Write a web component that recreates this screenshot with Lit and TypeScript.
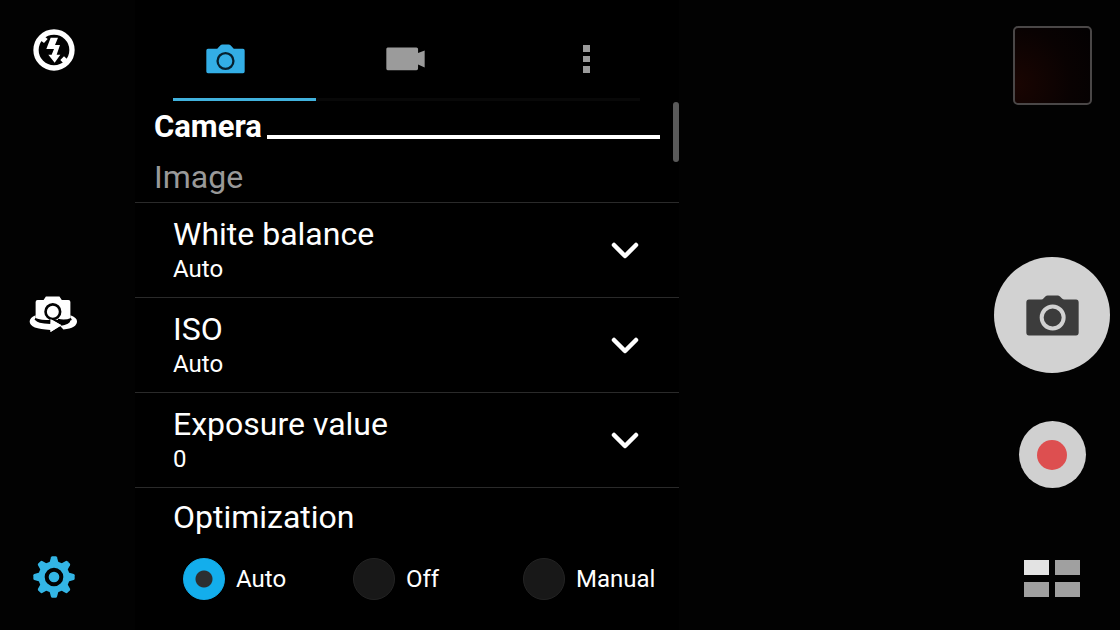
import { LitElement, html, css, svg } from 'lit';
import { customElement, property, state } from 'lit/decorators.js';
import { classMap } from 'lit/directives/class-map.js';

interface Setting {
  id: string;
  label: string;
  value: string;
  options: string[];
}

const flashOffIcon = svg`
  <svg viewBox="0 0 126 126" width="42" height="42" aria-hidden="true">
    <circle cx="63" cy="63" r="54" fill="none" stroke="currentColor" stroke-width="16" />
    <path d="M20 32 32 20 44 30 33 42Z M82 93 93 82 106 94 94 106Z" fill="currentColor" />
    <path d="M53 26H75L66 48H81L71 77H82L65 101 46 77H56L63 60H40Z" fill="currentColor" />
  </svg>`;

const switchIcon = svg`
  <svg viewBox="0 0 148 108" width="49" height="36" aria-hidden="true">
    <path d="M20 72V18Q20 12 26 12H44L51 1H92L99 12H119Q125 12 125 18V72Z" fill="currentColor" />
    <path d="M20 58Q2 65 2 77Q2 100 65 102V108L98 88 65 69V84Q22 82 20 72Z" fill="currentColor" />
    <path d="M125 58Q145 65 145 76Q145 97 104 101L94 90Q125 86 125 74Z" fill="currentColor" />
    <path d="M18 69Q36 76 65 76M87 72Q110 77 128 69" fill="none" stroke="#020202" stroke-width="7" />
    <circle cx="72" cy="47" r="22" fill="currentColor" stroke="#020202" stroke-width="8" />
    <path d="M65 69 98 88 65 108Z" fill="currentColor" />
  </svg>`;

const gearTeeth = [0, 45, 90, 135, 180, 225, 270, 315];

const gearIcon = svg`
  <svg viewBox="0 0 126 126" width="42" height="42" aria-hidden="true">
    <circle cx="63" cy="63" r="47" fill="currentColor" />
    ${gearTeeth.map(angle => svg`
      <path d="M49 22 54 4Q55 1 58 1H68Q71 1 72 4L77 22Z" fill="currentColor" transform="rotate(${angle} 63 63)" />
    `)}
    <circle cx="63" cy="63" r="22" fill="none" stroke="#020202" stroke-width="12" />
  </svg>`;

const cameraTabIcon = svg`
  <svg viewBox="0 0 118 90" width="39" height="30" aria-hidden="true">
    <path d="M6 14H34L43 4Q46 1 50 1H68Q72 1 75 4L84 14H112Q117 14 117 19V83Q117 88 112 88H6Q1 88 1 83V19Q1 14 6 14Z" fill="currentColor" />
    <circle cx="59" cy="51" r="24" fill="none" stroke="#06202f" stroke-width="7" />
  </svg>`;

const videoTabIcon = svg`
  <svg viewBox="0 0 118 72" width="39" height="24" aria-hidden="true">
    <path d="M5 1H92Q97 1 97 6V18L117 10V62L97 53V65Q97 70 92 70H5Q1 70 1 65V6Q1 1 5 1Z" fill="currentColor" />
  </svg>`;

const moreTabIcon = svg`
  <svg viewBox="0 0 7 28" width="7" height="28" aria-hidden="true">
    <path d="M0 0H7V7H0ZM0 11H7V17H0ZM0 21H7V28H0Z" fill="currentColor" />
  </svg>`;

const shutterIcon = svg`
  <svg viewBox="0 0 159 122" width="53" height="41" aria-hidden="true">
    <path d="M9 13H46Q50 13 53 9L58 4Q61 1 65 1H95Q99 1 102 4L108 10Q111 13 115 13H150Q158 13 158 22V112Q158 121 150 121H9Q1 121 1 112V22Q1 13 9 13Z" fill="#3c3c3c" />
    <circle cx="80" cy="67" r="33" fill="none" stroke="#d2d2d2" stroke-width="12" />
  </svg>`;

const chevronIcon = svg`
  <svg viewBox="0 0 28 18" width="28" height="18" aria-hidden="true">
    <path d="M3 4 14 15 25 4" fill="none" stroke="#fff" stroke-width="4.5" stroke-linecap="round" stroke-linejoin="round" />
  </svg>`;

@customElement('setting-row')
export class SettingRow extends LitElement {

  static styles = css`
    :host {
      display: block;
    }

    .row {
      display: grid;
      grid-template-columns: 1fr 28px;
      align-content: center;
      align-items: center;
      box-sizing: border-box;
      min-height: 95px;
      padding: 0 40px 0 38px;
      border-top: 1px solid #2a2a2a;
    }

    label {
      grid-area: 1 / 1;
      font-size: 32px;
      line-height: 38px;
    }

    select {
      grid-area: 2 / 1;
      appearance: none;
      margin: 0;
      padding: 0;
      border: none;
      background: none;
      color: inherit;
      font: inherit;
      font-size: 24px;
      line-height: 32px;
      cursor: pointer;
    }

    option {
      background: #111;
    }

    .chevron {
      grid-area: 1 / 2 / 3 / 3;
      display: flex;
      pointer-events: none;
    }
  `;

  @property({ attribute: false })
  setting!: Setting;

  render() {
    const { id, label, value, options } = this.setting;
    return html`
      <div class="row">
        <label for=${id}>${label}</label>
        <select id=${id}>
          ${options.map(option => html`<option ?selected=${option === value}>${option}</option>`)}
        </select>
        <span class="chevron">${chevronIcon}</span>
      </div>
    `;
  }
}

@customElement('app-root')
export class AppRoot extends LitElement {

  static styles = css`
    :host {
      display: flex;
      min-height: 100vh;
      background: #020202;
      color: #fff;
      font-family: Roboto, "Noto Sans", sans-serif;
    }

    button {
      display: flex;
      align-items: center;
      justify-content: center;
      margin: 0;
      padding: 0;
      border: none;
      background: none;
      color: inherit;
      cursor: pointer;
    }

    .tools {
      display: flex;
      flex: 0 0 107px;
      flex-direction: column;
      align-items: center;
      justify-content: space-between;
      box-sizing: border-box;
      margin-right: 28px;
      padding: 29px 0 32px;
    }

    .active {
      color: #33b5e5;
    }

    .panel {
      flex: 0 1 544px;
      min-width: 0;
      background: #000;
    }

    .tabs {
      display: grid;
      grid-template-columns: repeat(3, 1fr);
      padding: 20px 2px 0 0;
      color: #9b9b9b;
    }

    .tabs button {
      height: 78px;
    }

    .tabs .active {
      color: #33aee6;
    }

    .track {
      height: 3px;
      margin: 0 39px 0 38px;
      background: #080808;
    }

    .indicator {
      width: 143px;
      height: 3px;
      background: #41b2dd;
    }

    .settings {
      position: relative;
    }

    .scrollbar {
      position: absolute;
      top: 1px;
      right: 0;
      width: 6px;
      height: 60px;
      border-radius: 3px;
      background: #5a5a5a;
    }

    .section {
      display: flex;
      align-items: flex-end;
      gap: 5px;
      padding: 7px 19px 0;
    }

    h1, h2, legend {
      margin: 0;
      font-size: 32px;
      line-height: 38px;
    }

    h1 {
      font-size: 31px;
      font-weight: 700;
    }

    .rule {
      flex: 1;
      height: 4px;
      margin-bottom: 7px;
      background: #fff;
    }

    h2 {
      padding: 12px 19px 6px;
      font-weight: 400;
      color: #999;
    }

    fieldset {
      min-width: 0;
      margin: 0;
      padding: 0 0 0 38px;
      border: none;
      border-top: 1px solid #2a2a2a;
    }

    legend {
      float: left;
      width: 100%;
      padding: 10px 0 0;
    }

    .choices {
      display: grid;
      clear: both;
      grid-template-columns: 170px 170px 1fr;
      padding: 22px 0 0 10px;
    }

    .choice {
      display: flex;
      align-items: center;
      gap: 11px;
      font-size: 24px;
      line-height: 32px;
      cursor: pointer;
    }

    .choice input {
      appearance: none;
      flex: none;
      width: 42px;
      height: 42px;
      margin: 0;
      border: 1px solid #242424;
      border-radius: 50%;
      background: #181818;
    }

    .choice input:checked {
      border-color: #13aeec;
      background: radial-gradient(circle, #2c2f31 8px, #13aeec 9px);
    }

    .capture {
      display: grid;
      grid-template-rows: 1fr auto 1fr;
      justify-items: center;
      width: 116px;
      margin: 0 10px 0 auto;
    }

    .thumbnail {
      box-sizing: border-box;
      width: 79px;
      height: 79px;
      margin-top: 26px;
      border: 2px solid #4a4747;
      border-radius: 5px;
      background: radial-gradient(circle at 0% 75%, #1a0502, #090202 60%, #030102);
    }

    .shutter {
      width: 116px;
      height: 116px;
      border-radius: 50%;
      background: #d2d2d2;
    }

    .lower {
      display: flex;
      flex-direction: column;
      align-items: center;
      justify-content: space-between;
      padding: 48px 0 33px;
    }

    .record {
      width: 67px;
      height: 67px;
      border-radius: 50%;
      background: #d0d0d0;
    }

    .dot {
      width: 30px;
      height: 30px;
      border-radius: 50%;
      background: #dd4f50;
    }

    .modes {
      display: grid;
      grid-template-columns: 25px 25px;
      grid-auto-rows: 15px;
      gap: 7px 6px;
    }

    .tile {
      height: 15px;
      background: #a0a0a0;
    }

    .tile.current {
      background: #e3e3e3;
    }
  `;

  @state()
  private tab = 0;

  @state()
  private optimization = 'Auto';

  private tabs = [
    { name: 'Camera settings', icon: cameraTabIcon },
    { name: 'Video settings', icon: videoTabIcon },
    { name: 'Other settings', icon: moreTabIcon },
  ];

  private settings: Setting[] = [
    { id: 'white-balance', label: 'White balance', value: 'Auto', options: ['Auto', 'Daylight', 'Cloudy'] },
    { id: 'iso', label: 'ISO', value: 'Auto', options: ['Auto', '100', '200', '400', '800'] },
    { id: 'exposure', label: 'Exposure value', value: '0', options: ['-2', '-1', '0', '1', '2'] },
  ];

  private renderChoice(name: string) {
    return html`
      <label class="choice">
        <input
          type="radio"
          name="optimization"
          .value=${name}
          .checked=${this.optimization === name}
          @change=${() => { this.optimization = name; }}
        />
        ${name}
      </label>
    `;
  }

  render() {
    return html`
      <nav class="tools">
        <button aria-label="Flash off">${flashOffIcon}</button>
        <button aria-label="Switch camera">${switchIcon}</button>
        <button class="active" aria-label="Settings">${gearIcon}</button>
      </nav>

      <main class="panel">
        <div class="tabs" role="tablist">
          ${this.tabs.map((tab, i) => html`
            <button
              role="tab"
              class=${classMap({ active: i === this.tab })}
              aria-label=${tab.name}
              aria-selected=${i === this.tab}
              @click=${() => { this.tab = i; }}
            >${tab.icon}</button>
          `)}
        </div>
        <div class="track"><div class="indicator"></div></div>

        <div class="settings">
          <div class="scrollbar"></div>
          <div class="section">
            <h1>Camera</h1>
            <div class="rule"></div>
          </div>
          <h2>Image</h2>
          ${this.settings.map(setting => html`<setting-row .setting=${setting}></setting-row>`)}
          <fieldset>
            <legend>Optimization</legend>
            <div class="choices">
              ${['Auto', 'Off', 'Manual'].map(name => this.renderChoice(name))}
            </div>
          </fieldset>
        </div>
      </main>

      <aside class="capture">
        <button class="thumbnail" aria-label="Last photo"></button>
        <button class="shutter" aria-label="Take photo">${shutterIcon}</button>
        <div class="lower">
          <button class="record" aria-label="Record video"><span class="dot"></span></button>
          <button class="modes" aria-label="Modes">
            <span class="tile current"></span>
            <span class="tile"></span>
            <span class="tile"></span>
            <span class="tile"></span>
          </button>
        </div>
      </aside>
    `;
  }
}
